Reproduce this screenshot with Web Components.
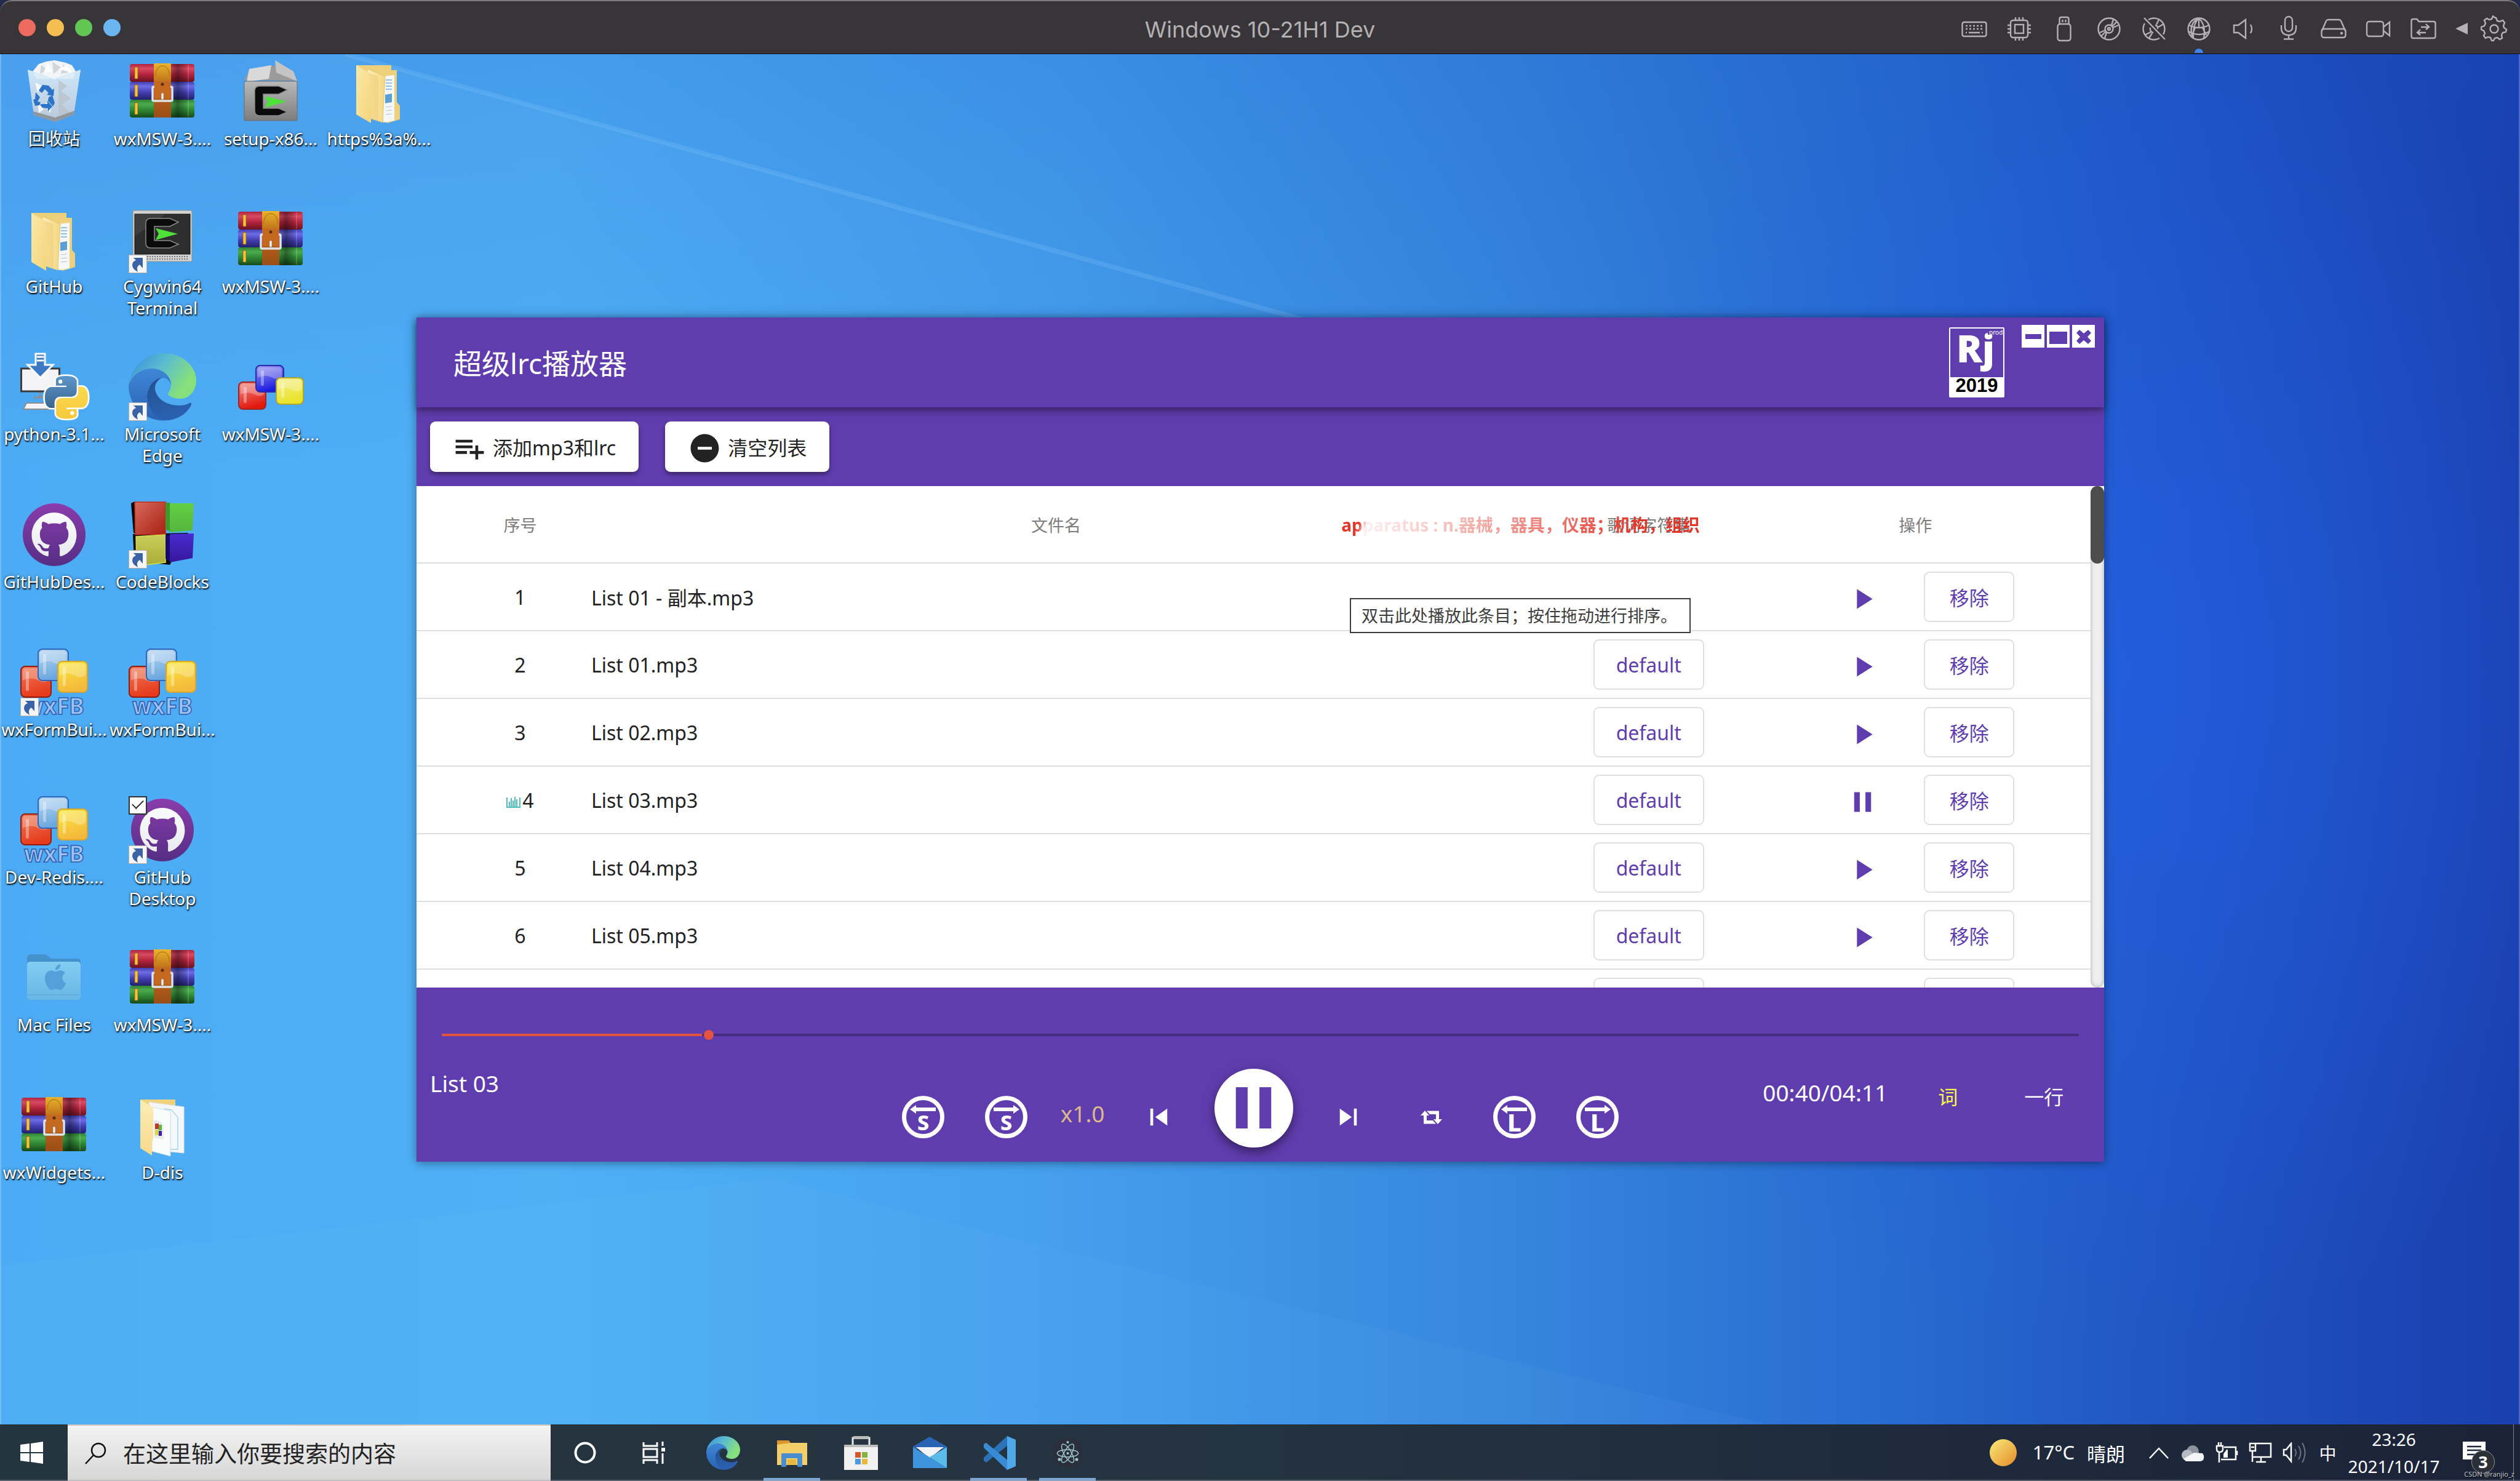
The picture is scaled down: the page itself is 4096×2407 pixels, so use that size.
<!DOCTYPE html>
<html lang="zh-CN">
<head>
<meta charset="utf-8">
<title>Windows 10-21H1 Dev</title>
<style>
  html, body {
    margin: 0;
    height: 100%;
  }

  body {
    display: flex;
    flex-direction: column;
    overflow: hidden;
    background: #232c4d;
    font-family: "Noto Sans", "Noto Sans CJK SC", sans-serif;
  }
</style>
</head>
<body>
<vm-titlebar>Windows 10-21H1 Dev</vm-titlebar>

<win-desktop>
  <desktop-column>
    <desktop-icon icon="recycle">回收站</desktop-icon>
    <desktop-icon icon="folder">GitHub</desktop-icon>
    <desktop-icon icon="pyinstall">python-3.1...</desktop-icon>
    <desktop-icon icon="github">GitHubDes...</desktop-icon>
    <desktop-icon icon="wxfb" shortcut>wxFormBui...</desktop-icon>
    <desktop-icon icon="wxfb">Dev-Redis....</desktop-icon>
    <desktop-icon icon="macfolder">Mac Files</desktop-icon>
    <desktop-icon icon="rar">wxWidgets...</desktop-icon>
  </desktop-column>
  <desktop-column>
    <desktop-icon icon="rar">wxMSW-3....</desktop-icon>
    <desktop-icon icon="cygterm" shortcut>Cygwin64<br>Terminal</desktop-icon>
    <desktop-icon icon="edge" shortcut>Microsoft<br>Edge</desktop-icon>
    <desktop-icon icon="codeblocks" shortcut>CodeBlocks</desktop-icon>
    <desktop-icon icon="wxfb">wxFormBui...</desktop-icon>
    <desktop-icon icon="github" shortcut checked>GitHub<br>Desktop</desktop-icon>
    <desktop-icon icon="rar">wxMSW-3....</desktop-icon>
    <desktop-icon icon="ddis">D-dis</desktop-icon>
  </desktop-column>
  <desktop-column>
    <desktop-icon icon="cygbox">setup-x86...</desktop-icon>
    <desktop-icon icon="rar">wxMSW-3....</desktop-icon>
    <desktop-icon icon="wxcubes">wxMSW-3....</desktop-icon>
  </desktop-column>
  <desktop-column>
    <desktop-icon icon="folder">https%3a%...</desktop-icon>
  </desktop-column>

  <lrc-window slot="window">
    <lrc-header slot="header">超级lrc播放器</lrc-header>
    <lrc-toolbar slot="toolbar"></lrc-toolbar>
    <track-table slot="list"></track-table>
    <player-bar slot="player" track="List 03" time="00:40/04:11"></player-bar>
  </lrc-window>
</win-desktop>

<task-bar></task-bar>

<script>
const OCTOCAT = 'M8 0C3.58 0 0 3.58 0 8c0 3.54 2.29 6.53 5.47 7.59.4.07.55-.17.55-.38 0-.19-.01-.82-.01-1.49-2.01.37-2.53-.49-2.69-.94-.09-.23-.48-.94-.82-1.13-.28-.15-.68-.52-.01-.53.63-.01 1.08.58 1.23.82.72 1.21 1.87.87 2.33.66.07-.52.28-.87.51-1.07-1.78-.2-3.64-.89-3.64-3.95 0-.87.31-1.59.82-2.15-.08-.2-.36-1.02.08-2.12 0 0 .67-.21 2.2.82.64-.18 1.32-.27 2-.27.68 0 1.36.09 2 .27 1.53-1.04 2.2-.82 2.2-.82.44 1.1.16 1.92.08 2.12.51.56.82 1.27.82 2.15 0 3.07-1.87 3.75-3.65 3.95.29.25.54.73.54 1.48 0 1.07-.01 1.93-.01 2.2 0 .21.15.46.55.38A8.013 8.013 0 0016 8c0-4.42-3.58-8-8-8z';
const APPLE = 'M12.152 6.896c-.948 0-2.415-1.078-3.96-1.04-2.04.027-3.91 1.183-4.961 3.014-2.117 3.675-.546 9.103 1.519 12.09 1.013 1.454 2.208 3.09 3.792 3.039 1.52-.065 2.09-.987 3.935-.987 1.831 0 2.35.987 3.96.948 1.637-.026 2.676-1.48 3.676-2.948 1.156-1.688 1.636-3.325 1.662-3.415-.039-.013-3.182-1.221-3.22-4.857-.026-3.04 2.48-4.494 2.597-4.559-1.429-2.09-3.623-2.324-4.39-2.376-2-.156-3.675 1.09-4.61 1.09zM15.53 3.83c.843-1.012 1.4-2.427 1.245-3.83-1.207.052-2.662.805-3.532 1.818-.78.896-1.454 2.338-1.273 3.714 1.338.104 2.715-.688 3.559-1.701';
const PY_BLUE = 'M14.25.18l.9.2.73.26.59.3.45.32.34.34.25.34.16.33.1.3.04.26.02.2-.01.13V8.5l-.05.63-.13.55-.21.46-.26.38-.3.31-.33.25-.35.19-.35.14-.33.1-.3.07-.26.04-.21.02H8.77l-.69.05-.59.14-.5.22-.41.27-.33.32-.27.35-.2.36-.15.37-.1.35-.07.32-.04.27-.02.21v3.06H3.17l-.21-.03-.28-.07-.32-.12-.35-.18-.36-.26-.36-.36-.35-.46-.32-.59-.28-.73-.21-.88-.14-1.05-.05-1.23.06-1.22.16-1.04.24-.87.32-.71.36-.57.4-.44.42-.33.42-.24.4-.16.36-.1.32-.05.24-.01h.16l.06.01h8.16v-.83H6.18l-.01-2.75-.02-.37.05-.34.11-.31.17-.28.25-.26.31-.23.38-.2.44-.18.51-.15.58-.12.64-.1.71-.06.77-.04.84-.02 1.27.05z';
const PY_YELLOW = 'M21.1 6.11l.28.06.32.12.35.18.36.27.36.35.35.47.32.59.28.73.21.88.14 1.04.05 1.23-.06 1.23-.16 1.04-.24.86-.32.71-.36.57-.4.45-.42.33-.42.24-.4.16-.36.09-.32.05-.24.02-.16-.01h-8.22v.82h5.84l.01 2.76.02.36-.05.34-.11.31-.17.29-.25.25-.31.24-.38.2-.44.17-.51.15-.58.13-.64.09-.71.07-.77.04-.84.01-1.27-.04-1.07-.14-.9-.2-.73-.25-.59-.3-.45-.33-.34-.34-.25-.34-.16-.33-.1-.3-.04-.25-.02-.2.01-.13v-5.34l.05-.64.13-.54.21-.46.26-.38.3-.32.33-.24.35-.2.35-.14.33-.1.3-.06.26-.04.21-.02.13-.01h5.84l.69-.05.59-.14.5-.21.41-.28.33-.32.27-.35.2-.36.15-.36.1-.35.07-.32.04-.28.02-.21V6.07h2.09l.14.01z';

const grad = (id, from, to, attrs = 'x1="0" y1="0" x2="0" y2="1"') =>
  `<linearGradient id="${id}" ${attrs}><stop offset="0" stop-color="${from}"/><stop offset="1" stop-color="${to}"/></linearGradient>`;

const tube = (id, light, mid, dark) =>
  `<linearGradient id="${id}" x1="0" y1="0" x2="0" y2="1"><stop offset="0" stop-color="${mid}"/><stop offset=".25" stop-color="${light}"/><stop offset=".6" stop-color="${mid}"/><stop offset="1" stop-color="${dark}"/></linearGradient>`;

const EDGE = `
  <defs>
    <linearGradient id="ea" x1="0" y1="0" x2="1" y2=".5"><stop offset=".1" stop-color="#3c94dd"/><stop offset=".5" stop-color="#5bbcd0"/><stop offset=".95" stop-color="#86e07c"/></linearGradient>
    ${grad('eb', '#3f86d6', '#2a62b4')}
    ${grad('ec', '#24508f', '#2a61b0', 'x1="0" y1="0" x2=".3" y2="1"')}
  </defs>
  <path fill="url(#ea)" d="M0 52C4 22 28 0 57 0c31 0 53 22 53 44 0 18-12 30-26 30-10 0-20-4-20-8 0-2 5-6 5-15C69 40 56 25 38 25 20 25 6 36 0 52z"/>
  <path fill="url(#eb)" d="M0 52c6-16 20-27 38-27 18 0 31 13 31 26-3-8-9-11-14-11-13 0-25 14-25 28 0 24 18 38 34 41C28 113 0 86 0 52z"/>
  <path fill="url(#ec)" d="M55 40c-13 0-25 14-25 30 0 24 20 40 36 39 18-3 30-13 36-25 1-3-1-4-3-3-5 3-11 4-17 4-22 0-39-13-39-29 0-6 4-13 12-16z"/>`;

const CYG = `
  <path d="M41 4H10Q2 4 2 12v32q0 8 8 8h31l14-6-14-6H16V17h25l14-7z" fill="#0b0b0b" stroke="#8a8a8a" stroke-width="1.5"/>
  <path fill="#4fe03a" d="M18 20l36 9-36 10 5-10z"/>`;

const cube = (x, y, w, h, light, dark, edge) => `
  <linearGradient id="c${x}${y}" x1="0" y1="0" x2=".3" y2="1"><stop offset="0" stop-color="${light}"/><stop offset="1" stop-color="${dark}"/></linearGradient>
  <rect x="${x}" y="${y}" width="${w}" height="${h}" rx="7" fill="url(#c${x}${y})" stroke="${edge}" stroke-width="2"/>
  <path d="M${x + 3} ${y + h * .45}q${w * .3} ${-h * .12} ${w * .5} 0t${w - 6 - w * .5} 0V${y + 8}q0-5-5-5H${x + 8}q-5 0-5 5z" fill="#fff" opacity=".28"/>
  <rect x="${x + 8}" y="${y + 8}" width="5" height="${h - 18}" rx="2" fill="#fff" opacity=".35"/>`;

// every drawing used on the page: [viewBox, markup]
const ICONS = {
  recycle: ['0 0 110 110', `
    <defs>${grad('rb', '#dff0fb', '#c7ced6')}</defs>
    <path fill="#f2f4f6" d="M20 22l10-12 12-4 14-2 18 4 10 4 6 10-4 12H26z"/>
    <path fill="#d2d6da" d="M34 12l12 8-14 6zM52 6l14 10-12 10zM70 10l8 14-12 2z"/>
    <path fill="#ffffff" d="M44 8l8 14-14 2zM62 18l14-6 8 12z"/>
    <path d="M12 20l43 15 43-15-11 72-30 12-35-11z" fill="url(#rb)" opacity=".88"/>
    <path d="M62 36l14 10-10 8 16 12-14 10 12 12-18 12z" fill="#b9c1c8" opacity=".7"/>
    <path d="M24 40l12 6-8 10zM40 74l14-4-6 20zM28 72l10 12-8 6z" fill="#fff" opacity=".8"/>
    <path d="M12 20l43 15 43-15" fill="none" stroke="#cfeafa" stroke-width="1.5"/>
    <path d="M22 93l35 11 30-12 1-6-31 11-36-10z" fill="#8f969c"/>
    <g fill="#2b74c9"><path d="M30 53l6-9 10 1 6 7 3-2-1 12-11-2 3-3-6-6-5 6z"/><path d="M25 56l7 8-4 7 5 1-2 5-7 1-3-10 3-1z"/><path d="M36 75h8v-5l8 9-7 8v-5l-9-1-4-5z"/><path d="M46 64l6-3 4 12-3 6-8-9z"/></g>`],

  folder: ['0 0 110 110', `
    <defs>${grad('fa', '#fbe9a8', '#f4d57c', 'x1="0" y1="0" x2="1" y2="1"')}${grad('fb', '#fdf0bd', '#f3d682', 'x1="0" y1="0" x2="1" y2="0"')}</defs>
    <path fill="#edcf7c" d="M18 12h57v8h9v52l5 6v22l-20 6-51-16z"/>
    <path fill="#f6f7f8" d="M62 30l18-2v74l-18 3z"/>
    <path stroke="#6fb3e6" stroke-width="1.5" d="M66 36h10M66 41h10M66 46h10M66 51h10"/>
    <path fill="#5b9fd4" d="M65 60l11-2v14l-11 2z"/>
    <path stroke="#b9c4cc" stroke-width="1.2" d="M66 80l10-1M66 86l10-1M66 92l10-1"/>
    <path fill="url(#fb)" stroke="#ecc96c" d="M36 18l29 12-4 75-24-8z"/>
    <path fill="url(#fa)" d="M18 12l24 14v80L18 92z"/>
    <path fill="#f0cf78" opacity=".6" d="M42 26l12 4v72l-12-4z"/>`],

  pyinstall: ['0 0 110 110', `
    <rect x="1.5" y="25" width="62" height="37" fill="#f3f3f5" stroke="#3b3b3d" stroke-width="3"/>
    <path d="M32 64v7M22 72h24" stroke="#8d8d8f" stroke-width="3"/>
    <path d="M10 81h40v10H5z" fill="#f3f3f5" stroke="#8d8d8f" stroke-width="2"/>
    <path d="M25 1h15v18h13L32.5 40 12 19h13z" fill="#3c78c4" stroke="#fff" stroke-width="3"/>
    <path d="M27 6h11M27 12h11" stroke="#fff" stroke-width="3"/>
    <g transform="translate(40 37) scale(2.9)">
      <defs>${grad('pb', '#5c96c8', '#3a6690')}${grad('py', '#fbd94f', '#f6c93c')}</defs>
      <path d="${PY_BLUE}" fill="#fff" stroke="#fff" stroke-width="1.8"/><path d="${PY_YELLOW}" fill="#fff" stroke="#fff" stroke-width="1.8"/>
      <path d="${PY_BLUE}" fill="url(#pb)"/><path d="${PY_YELLOW}" fill="url(#py)"/>
      <circle cx="8.7" cy="3.2" r="1.1" fill="#fff"/><circle cx="15.3" cy="20.8" r="1.1" fill="#fff"/>
    </g>`],

  github: ['0 0 110 110', `
    <defs>${grad('gh', '#8a3cab', '#552e85')}${grad('gw', '#fbfbfd', '#e8ebee')}</defs>
    <circle cx="55" cy="55" r="51" fill="url(#gh)"/>
    <path transform="translate(18.5 19) scale(4.56)" d="${OCTOCAT}" fill="url(#gw)"/>`],

  wxfb: ['0 0 110 110', `
    ${cube(1, 29, 49, 50, '#ee7a5a', '#e63c1c', '#8f1d12')}
    ${cube(29, 1, 49, 51, '#b8d8f2', '#6ba6de', '#2c66bd')}
    ${cube(61, 21, 48, 50, '#fbe93e', '#f4b93c', '#d9a52c')}
    <text x="55" y="107" text-anchor="middle" font-family="Noto Sans" font-weight="700" font-size="37" fill="#9cc2ee" stroke="#2f5cb4" stroke-width="1.5">wxFB</text>`],

  wxcubes: ['0 0 110 110', `
    ${cube(3, 47, 44, 44, '#f08b86', '#e1190f', '#a02420')}
    ${cube(31, 20, 45, 43, '#9b9af0', '#1a1ae0', '#2b2ba8')}
    ${cube(64, 40, 44, 43, '#f4f08a', '#e9e32a', '#aaa62e')}`],

  macfolder: ['0 0 110 110', `
    <defs>${grad('mf', '#82cdf3', '#68b6e4')}</defs>
    <path fill="#4492cc" d="M11 24q0-7 7-7h20q4 0 7 3l5 4h42q6 0 6 6v10H11z"/>
    <rect x="11" y="29" width="87" height="62" rx="5" fill="url(#mf)"/>
    <path d="M12 83h85" stroke="#5aa6d4" stroke-width="1"/>
    <path transform="translate(36 33) scale(1.75)" fill="#559fda" d="${APPLE}"/>`],

  rar: ['0 0 110 110', `
    <defs>${tube('r1', '#d84a62', '#b0233c', '#6b1321')}${tube('r2', '#6f6ce6', '#413eb0', '#24216c')}${tube('r3', '#4cab4e', '#2d8433', '#174a1b')}
    ${grad('rs', '#e9b52c', '#c2741c')}${grad('ro', '#d67a24', '#9a4e16')}
    <linearGradient id="sh"><stop offset=".6" stop-opacity="0"/><stop offset=".74" stop-opacity=".4"/><stop offset=".9" stop-opacity="0"/></linearGradient></defs>
    <rect x="2" y="10" width="105" height="29" rx="4" fill="url(#r1)"/>
    <rect x="2" y="39" width="105" height="29" rx="4" fill="url(#r2)"/>
    <rect x="2" y="68" width="105" height="29" rx="4" fill="url(#r3)"/>
    <rect x="2" y="10" width="105" height="87" fill="url(#sh)"/>
    <path d="M97 11v27M97 40v27M97 69v27" stroke="#fff" opacity=".15" stroke-width="2"/>
    <path fill="#f5c43a" stroke="#8b5a12" stroke-width=".8" d="M10 15h5v19h-5zM10 44h5v19h-5zM10 73h5v19h-5z"/>
    <rect x="41" y="9" width="28" height="88" fill="url(#ro)"/>
    <path d="M41 9h28v26q0 3-3 3H44q-3 0-3-3z" fill="url(#rs)"/>
    <path d="M43 30q2-17 12-17t12 17" fill="none" stroke="#a8690f" stroke-width="1"/>
    <rect x="39" y="47" width="32" height="23" rx="2" fill="none" stroke="#dfe2e6" stroke-width="3.5"/>
    <rect x="42" y="38" width="26" height="28" fill="#c4691f"/>
    <circle cx="55" cy="43" r="2.5" fill="#5a2e0c"/>
    <rect x="53" y="57" width="4" height="11" rx="2" fill="#eceef0" stroke="#777" stroke-width=".5"/>`],

  cygbox: ['0 0 110 110', `
    <defs>${grad('cb', '#b9b9b9', '#7d7d7d')}</defs>
    <path fill="#9b9b9b" d="M12 36L20 20l35-7h20l15 10 8 14z"/>
    <path fill="#d9d9d9" d="M20 18l36-6-4 22-36 5z"/>
    <path fill="#c4c4c4" d="M62 4l30 18 6 16-34-14z"/>
    <rect x="12" y="38" width="86" height="64" rx="2" fill="url(#cb)" stroke="#6b6b6b"/>
    <g transform="translate(27 42)">${CYG}</g>`],

  cygterm: ['0 0 110 110', `
    <rect x="7" y="8" width="96" height="83" rx="2" fill="#d3d3d3" stroke="#8d8d8d"/>
    <rect x="10" y="14" width="90" height="65" fill="#2e2e2e" stroke="#111"/>
    <path d="M10 14h50L10 50z" fill="#fff" opacity=".08"/>
    <path d="M30 83h66M30 87h66" stroke="#777" stroke-width="2" stroke-dasharray="2 2"/>
    <g transform="translate(26 17)">${CYG}</g>`],

  edge: ['0 0 110 110', EDGE],

  codeblocks: ['0 0 110 110', `
    <defs>${grad('k1', '#d86a5e', '#a81f12', 'x1="0" y1="0" x2="1" y2="1"')}${grad('k2', '#63cf45', '#55b53c')}${grad('k3', '#c9cf5c', '#a9ab34')}${grad('k4', '#4a2cd0', '#34169c')}</defs>
    <path fill="#0a0a0a" d="M4 4l6-3 6 54-8-3zM7 54l90-2-30 52-58-6z"/>
    <path fill="url(#k1)" stroke="#c52a1b" stroke-width="1.5" d="M10 2h50v52l-49 1z"/>
    <path fill="#3f9a2c" d="M60 3h8v46l-8-2z"/><path fill="url(#k2)" d="M67 4h39l-2 44-37 3z"/>
    <path fill="url(#k3)" stroke="#d8dc4a" stroke-width="1.5" d="M12 58l48-3v45l-47 6z"/>
    <path fill="#1a0a70" d="M60 54l8 3v42l-8-5z"/><path fill="url(#k4)" d="M67 54l39-1-2 40-37 7z"/>`],

  ddis: ['0 0 110 110', `
    <defs>${grad('dd', '#fdeeb6', '#f6d98a')}</defs>
    <path fill="#f2d27c" d="M19 13h57v20H19z"/>
    <path fill="#f4f6f7" stroke="#dfe3e6" d="M33 17l57 8v75l-40-4z"/>
    <path fill="none" stroke="#7cc4ea" d="M58 28l12 2 10 12v52H58"/>
    <path fill="#fafbfb" stroke="#cfe3ef" d="M38 25l30 7v73l-30-8z"/>
    <path fill="#e8eaec" d="M41 46l10 2 6 8v22l-16-3z"/>
    <path fill="#c8332a" d="M43 52h6v9h-6z"/><path fill="#58b83e" d="M49 54h5v9h-5z"/><path fill="#d6d64a" d="M43 62h6v9h-6z"/><path fill="#3a1cb4" d="M49 64h5v8h-5z"/>
    <path fill="url(#dd)" d="M19 13l21 13v52l-2 2v24L19 92z"/>`],

  shortcut: ['0 0 30 30', `
    <rect x=".5" y=".5" width="29" height="29" fill="#f4f5f6" stroke="#b9aeac"/>
    <path fill="#3c63a6" d="M8 5h15v17l-5-6q-6 3-3 12-9-5-9-11 0-6 6-8z"/>`],

  // host toolbar
  keyboard: ['0 0 44 44', `<rect x="2.5" y="11" width="39" height="23" rx="3"/><path d="M8 17h28M8 22h28" stroke-dasharray="3 3"/><path d="M13 28h18M8 28h2M34 28h2"/>`],
  chip: ['0 0 44 44', `<rect x="8" y="8" width="28" height="28" rx="4"/><rect x="15" y="15" width="14" height="14"/><path d="M16 3v5M22 3v5M28 3v5M16 36v5M22 36v5M28 36v5M3 16h5M3 22h5M3 28h5M36 16h5M36 22h5M36 28h5"/>`],
  usb: ['0 0 44 44', `<rect x="11.5" y="14" width="21" height="27" rx="4"/><path d="M14.5 14V6q0-3 3-3h9q3 0 3 3v8M19.500 7v4M24.500 7v4"/>`],
  disc: ['0 0 44 44', `<circle cx="22" cy="22" r="17.500"/><circle cx="22" cy="22" r="6.500"/><circle cx="22" cy="22" r="2"/><path d="M26 16l3-9M27 18l8-8M18 28l-3 9M17 26l-8 8M28 20l9-4M16 24L7 28"/>`],
  discoff: ['0 0 44 44', `<path d="M13 7a17.500 17.500 0 0 1 24 24M31 37A17.500 17.500 0 0 1 7 13M6 4l34 35M26 15l4-8M29 19l9-5M17 27l-10 5M19 29l-5 8M24 16q5 1 4 6M16 20q-1 7 5 8"/>`],
  globe: ['0 0 44 44', `<circle cx="22" cy="22" r="17.500"/><path d="M22 4.500Q12 14 13 36M22 4.500Q34 16 30 37M22 4.500V20M6 16q16 8 32 0M5 26q18 10 34 0M22 4.500Q4 14 12 36M16 20l-6 14M28 20l6 12"/>`],
  speaker: ['0 0 44 44', `<path d="M6 16h7l12-9v30l-12-9H6zM33 15q4 7 0 14"/>`],
  mic: ['0 0 44 44', `<rect x="16" y="2" width="12" height="24" rx="6"/><path d="M10 16v4q0 12 12 12t12-12v-4M22 32v6M14 38.500h16"/>`],
  drive: ['0 0 44 44', `<path d="M2.500 26L10 9q1-2 3-2h18q2 0 3 2l7.500 17v6q0 4-4 4h-31q-4 0-4-4v-6q0-4 4-4h31q4 0 4 4"/><circle cx="35" cy="29" r="1"/>`],
  camera: ['0 0 44 44', `<rect x="3" y="10" width="27" height="24" rx="4"/><path d="M30 19l10-8v22l-10-8"/>`],
  sharefolder: ['0 0 44 44', `<path d="M2.500 34V9q0-3 3-3h6l3 4h24q3 0 3 3v21q0 3-3 3h-33q-3 0-3-3z"/><path d="M18 19h12M26 14l5 5-5 4M26 28H13M17 23l-5 5 5 4"/>`],
  triangle: ['0 0 22 44', `<path stroke="none" fill="currentColor" d="M21 12v19L1 21.500z"/>`],
  gear: ['0 0 44 44', `<circle cx="22" cy="22" r="6.500"/><path d="M22 3l3 1 2 5 4 1 5-2 3 4-2 5 1 3 4 3-1 4-5 1-2 4 1 5-4 2-4-3-4 1-2 4h-3l-2-5-4-1-4 2-3-4 2-4-2-4-4-2v-4l5-2 2-4-2-5 4-3 4 2 4-1 2-5z"/>`],

  // player
  listadd: ['0 0 24 24', `<path d="M14 10H2v2h12v-2zm0-4H2v2h12V6zm4 8v-4h-2v4h-4v2h4v4h2v-4h4v-2h-4zM2 16h8v-2H2v2z"/>`],
  remove: ['0 0 24 24', `<path d="M12 2C6.480 2 2 6.480 2 12s4.480 10 10 10 10-4.480 10-10S17.520 2 12 2zm5 11H7v-2h10v2z"/>`],
  play: ['0 0 24 24', `<path d="M8 5v14l11-7z"/>`],
  pause: ['0 0 24 24', `<path d="M6 19h4V5H6v14zm8-14v14h4V5h-4z"/>`],
  prev: ['0 0 24 24', `<path d="M6 6h2v12H6zm3.500 6l8.500 6V6z"/>`],
  next: ['0 0 24 24', `<path d="M6 18l8.500-6L6 6v12zM16 6v12h2V6h-2z"/>`],
  repeat: ['0 0 35 22', `<path d="M7 0l7 8H10v8h10l5 5.500H5V8H0zM28 22l-7-8h4V6H15L10 .5h20V14h5z"/>`],
  wave: ['0 0 23 20', `<path fill="none" stroke="#4fc0c0" stroke-width="2" d="M1 3v16M5 10v9M8 4v15M11 8v11M14 2v17M17 6v13M22 3v16M0 19h23"/>`],

  // taskbar
  start: ['0 0 37 36', `<path fill="#fff" d="M0 5l15-2v14H0zM17 3l20-3v17H17zM0 19h15v14L0 31zM17 19h20v17l-20-3z"/>`],
  search: ['0 0 36 36', `<g fill="none" stroke="#111" stroke-width="2.5"><circle cx="23" cy="13" r="11"/><path d="M15 21L2 35"/></g>`],
  cortana: ['0 0 36 36', `<circle cx="18" cy="18" r="15.5" fill="none" stroke="#fff" stroke-width="4"/>`],
  taskview: ['0 0 38 36', `<path fill="none" stroke="#fff" stroke-width="3" d="M2 1v6h22V1M2 12h22v13H2zM2 36v-6h22v6M33 0v7M33 19v17"/><rect x="31" y="10" width="6" height="6" fill="#fff"/>`],
  explorer: ['0 0 55 55', `<path fill="#d8962c" d="M3 7h19l4 5v8H3z"/><path fill="#f3cf6a" d="M3 14l22-3h27v36H3z"/><path fill="#4a8ed0" d="M10 30q0-2 2-2h30q2 0 2 2v20h-8V36H18v14h-8z"/><path fill="#e9b840" d="M20 38h14v9H20z"/>`],
  store: ['0 0 55 55', `<path fill="none" stroke="#e9e9e9" stroke-width="3" d="M14 22V3h27v19"/><path fill="#bcbcbc" d="M15 0h25v5H15zM0 14h55v6H0z"/><path fill="#f1f1f1" d="M0 18h55v37H0z"/><path fill="#d8532f" d="M18 26h9v9h-9z"/><path fill="#85b43c" d="M29 26h9v9h-9z"/><path fill="#4a9ae0" d="M18 37h9v9h-9z"/><path fill="#efb73a" d="M29 37h9v9h-9z"/>`],
  mail: ['0 0 55 55', `<path fill="#2a62b4" d="M0 17L27 1l28 16v4H0z"/><path fill="#f1f3f5" d="M5 18h45L27 36z"/><path fill="#5bbbe8" d="M0 18l55 34V18L27 34z"/><path fill="#3f94dc" d="M0 18l55 34H0z"/>`],
  vscode: ['0 0 55 55', `<path fill="#2b73b8" d="M41 0L3 35v5l4 3 35-28z"/><path fill="#3a8ad4" d="M3 13v6l38 36 3-14L7 11z"/><path fill="#4fa8ea" d="M41 0l14 6v43l-14 6z"/>`],
  electron: ['0 0 55 55', `<circle cx="27.5" cy="27.5" r="25" fill="#2b2f3c"/><g fill="none" stroke="#9fc7cc" stroke-width="1.5"><ellipse cx="27.5" cy="28" rx="17" ry="6"/><ellipse cx="27.5" cy="28" rx="17" ry="6" transform="rotate(60 27.5 28)"/><ellipse cx="27.5" cy="28" rx="17" ry="6" transform="rotate(120 27.5 28)"/></g><g fill="#9fc7cc"><circle cx="27.5" cy="28" r="2"/><circle cx="14" cy="38" r="2.5"/><circle cx="42" cy="38" r="2.5"/><circle cx="27.5" cy="10" r="2"/></g>`],
  sun: ['0 0 44 44', `<defs>${grad('su', '#f8ec7a', '#e58a2a', 'x1="0" y1="0" x2="1" y2="1"')}</defs><circle cx="22" cy="22" r="22" fill="url(#su)"/>`],
  chevron: ['0 0 38 34', `<path fill="none" stroke="#fff" stroke-width="2.5" d="M4 26L19 10l15 16"/>`],
  cloud: ['0 0 38 34', `<circle cx="19" cy="15" r="10" fill="#8d939c"/><circle cx="10" cy="21" r="9" fill="#b7bbc1"/><path fill="#f4f5f6" d="M4 27l17-10 14 1q4 5 1 11l-4 2H8z"/>`],
  battery: ['0 0 38 34', `<g fill="none" stroke="#fff" stroke-width="2.5"><path d="M15 8h19v20H10M36 14v7M6 0v6M10 0v6M3 6h10v5q0 5-5 5t-5-5zM7 16v17"/></g><path fill="#fff" d="M14 25V19l5-7h2v13z"/>`],
  network: ['0 0 38 34', `<g fill="none" stroke="#fff" stroke-width="2.5"><path d="M12 2h24v22H6M2 2h9v12H2zM6 14v18M20 24v8M12 32h16M4 8h5"/></g>`],
  volume: ['0 0 38 34', `<path fill="none" stroke="#fff" stroke-width="2.5" d="M2 12h4l8-10v29L6 21H2z"/><path fill="none" stroke="#6b7383" stroke-width="2" d="M20 11q4 6 0 12M26 6q7 11 0 22M32 1q9 16 0 32"/>`],
  notify: ['0 0 37 36', `<path fill="#fff" d="M0 0h37v29H22l-7 7v-7H0z"/><path stroke="#1e2639" stroke-width="2.5" d="M7 8h23M7 14h23M7 21h16"/>`]
};

const svg = (name) => `<svg viewBox="${ICONS[name][0]}" aria-hidden="true">${ICONS[name][1]}</svg>`;

class VmTitlebar extends HTMLElement {
  constructor() {
    super();
    const shadow = this.attachShadow({ mode: 'open' });
    const tools = ['keyboard', 'chip', 'usb', 'disc', 'discoff', 'globe', 'speaker', 'mic', 'drive', 'camera', 'sharefolder'];
    shadow.innerHTML = `
      <style>
        :host {
          display: grid;
          grid-template-columns: 1fr auto 1fr;
          align-items: center;
          box-sizing: border-box;
          height: 88px;
          flex: none;
          background: #383538;
          border-top: 2px solid #7d7b7e;
          border-bottom: 1px solid #0c0c10;
          border-radius: 20px 20px 0 0;
          color: #b3b1b3;
          font: 36px/48px Inter, "Noto Sans", sans-serif;
        }
        button {
          display: flex;
          padding: 0;
          border: 0;
          background: none;
          color: inherit;
        }
        .lights {
          display: flex;
          gap: 18px;
          padding-left: 30px;
        }
        .lights button {
          width: 28px;
          height: 28px;
          border-radius: 50%;
        }
        .title { padding-top: 6px; }
        .tools {
          display: flex;
          justify-content: flex-end;
          gap: 29px;
          padding: 4px 20px 0 0;
        }
        .tools button { position: relative; }
        .tools svg {
          height: 44px;
          fill: none;
          stroke: currentColor;
          stroke-width: 2.4;
        }
        .active::after {
          content: "";
          position: absolute;
          left: 15px;
          top: 54px;
          width: 14px;
          height: 7px;
          border-radius: 7px 7px 0 0;
          background: #3f83f0;
        }
        .last { display: flex; gap: 20px; }
      </style>
      <div class="lights">
        <button aria-label="关闭" style="background:#ec6a5f"></button>
        <button aria-label="最小化" style="background:#f4be50"></button>
        <button aria-label="全屏" style="background:#62c655"></button>
        <button aria-label="融合" style="background:#6bb6f0"></button>
      </div>
      <div class="title"><slot></slot></div>
      <div class="tools">
        ${tools.map((t) => `<button class="${t === 'globe' ? 'active' : ''}" aria-label="${t}">${svg(t)}</button>`).join('')}
        <div class="last">
          <button aria-label="collapse">${svg('triangle')}</button>
          <button aria-label="settings">${svg('gear')}</button>
        </div>
      </div>
    `;
  }
}
customElements.define('vm-titlebar', VmTitlebar);

class WinDesktop extends HTMLElement {
  constructor() {
    super();
    this.attachShadow({ mode: 'open' }).innerHTML = `
      <style>
        :host {
          display: block;
          position: relative;
          flex: 1;
          min-height: 0;
          overflow: hidden;
          background:
            radial-gradient(ellipse 22% 50% at 84% 45%, rgba(36, 96, 236, .6), rgba(36, 96, 236, 0)),
            linear-gradient(rgba(20, 80, 195, .2), rgba(20, 80, 195, 0) 30%),
            linear-gradient(90deg, #4cabf4 0%, #4fb0f6 22%, #459fed 42%, #3686dd 60%, #286bd0 75%, #1f51c0 88%, #1a3fae 100%);
        }
        .beams {
          position: absolute;
          width: 100%;
          height: 100%;
        }
        .icons {
          position: relative;
          display: flex;
          padding-top: 6px;
        }
        .edge {
          position: absolute;
          inset: 0;
          border: solid rgba(255, 255, 255, .22);
          border-width: 0 2px;
          pointer-events: none;
        }
      </style>
      <svg class="beams" viewBox="0 0 1568 853" preserveAspectRatio="none" aria-hidden="true">
        <defs>
          <linearGradient id="b" x1="0" y1="0" x2=".25" y2="1"><stop offset="0" stop-color="#8fd0ff" stop-opacity=".12"/><stop offset=".5" stop-color="#8fd0ff" stop-opacity="0"/></linearGradient>
        </defs>
        <path fill="url(#b)" d="M215 0L900 190v300L0 420V0z"/>
        <path fill="none" stroke="#9ad4ff" stroke-opacity=".18" stroke-width="3" d="M215 0L900 190"/>
        <path fill="#8fd0ff" fill-opacity=".05" d="M0 754L480 700 1100 853H0z"/>
      </svg>
      <div class="icons"><slot></slot></div>
      <slot name="window"></slot>
      <div class="edge"></div>
    `;
  }
}
customElements.define('win-desktop', WinDesktop);

class DesktopColumn extends HTMLElement {
  constructor() {
    super();
    this.attachShadow({ mode: 'open' }).innerHTML = `
      <style>
        :host {
          display: grid;
          grid-template-columns: 176px;
          grid-auto-rows: 240px;
          align-content: start;
          width: 176px;
        }
      </style>
      <slot></slot>
    `;
  }
}
customElements.define('desktop-column', DesktopColumn);

class DesktopIcon extends HTMLElement {
  connectedCallback() {
    if (this.shadowRoot) return;
    this.attachShadow({ mode: 'open' }).innerHTML = `
      <style>
        :host { display: block; }
        a {
          display: flex;
          flex-direction: column;
          align-items: center;
          gap: 4px;
          color: #fff;
          text-decoration: none;
          text-align: center;
          white-space: nowrap;
          font-size: 28px;
          line-height: 35px;
        }
        .label { text-shadow: 1px 2px 2px rgba(0, 0, 0, .95), 0 0 4px rgba(0, 0, 0, .55); }
        .pic {
          position: relative;
          width: 110px;
          height: 110px;
        }
        .pic > svg {
          display: block;
          width: 100%;
          height: 100%;
          overflow: visible;
        }
        .badge {
          position: absolute;
          left: 0;
          bottom: 0;
          width: 30px;
          height: 30px;
        }
        .badge svg { display: block; }
        input {
          appearance: none;
          position: absolute;
          left: 0;
          top: 0;
          width: 30px;
          height: 30px;
          margin: 0;
          border: 2px solid #333;
          background: #fff;
        }
        input::after {
          content: "";
          position: absolute;
          left: 4px;
          top: 4px;
          width: 16px;
          height: 8px;
          border: solid #333;
          border-width: 0 0 2px 2px;
          transform: rotate(-45deg);
        }
      </style>
      <a href="#">
        <span class="pic">
          ${svg(this.getAttribute('icon'))}
          ${this.hasAttribute('shortcut') ? `<span class="badge">${svg('shortcut')}</span>` : ''}
          ${this.hasAttribute('checked') ? '<input type="checkbox" checked aria-label="选择">' : ''}
        </span>
        <span class="label"><slot></slot></span>
      </a>
    `;
  }
}
customElements.define('desktop-icon', DesktopIcon);

class LrcWindow extends HTMLElement {
  constructor() {
    super();
    this.attachShadow({ mode: 'open' }).innerHTML = `
      <style>
        :host {
          --purple: #603dae;
          position: absolute;
          left: 16.53%;
          top: 428px;
          width: 66.97%;
          height: 57vh;
          display: flex;
          flex-direction: column;
          background: var(--purple);
          box-shadow: 0 2px 14px rgba(0, 0, 0, .4);
        }
      </style>
      <slot name="header"></slot>
      <slot name="toolbar"></slot>
      <slot name="list"></slot>
      <slot name="player"></slot>
    `;
  }
}
customElements.define('lrc-window', LrcWindow);

class LrcHeader extends HTMLElement {
  constructor() {
    super();
    this.attachShadow({ mode: 'open' }).innerHTML = `
      <style>
        :host {
          position: relative;
          z-index: 1;
          display: flex;
          align-items: flex-start;
          flex: none;
          height: 146px;
          padding: 0 15px 0 60px;
          background: var(--purple);
          color: #fff;
          box-shadow: 0 5px 10px rgba(0, 0, 0, .35), 0 2px 22px rgba(0, 0, 0, .15);
        }
        h1 {
          flex: 1;
          margin: 0;
          font-size: 46px;
          font-weight: 400;
          line-height: 148px;
        }
        .logo {
          width: 90px;
          height: 114px;
          margin: 16px 28px 0 0;
        }
        .buttons {
          display: flex;
          gap: 4px;
          padding-top: 12px;
        }
        button {
          display: grid;
          place-items: center;
          width: 37px;
          height: 37px;
          padding: 0;
          border: 0;
          background: #fff;
        }
        button svg { width: 37px; fill: var(--purple); }
      </style>
      <h1><slot></slot></h1>
      <svg class="logo" viewBox="0 0 90 114" role="img" aria-label="Rj 2019">
        <rect x="1" y="1" width="88" height="112" rx="1" fill="#603dae" stroke="#fff" stroke-width="2"/>
        <rect x="1" y="81" width="88" height="32" fill="#fff"/>
        <text x="12" y="57" fill="#fff" font-family="Open Sans, Noto Sans" font-weight="800" font-size="62">Rj</text>
        <rect x="63" y="3" width="25" height="9" fill="#603dae"/>
        <text x="65" y="12" fill="#fff" font-family="Noto Sans" font-size="10">prod</text>
        <text x="45" y="105" text-anchor="middle" fill="#000" font-family="Liberation Sans" font-weight="700" font-size="31">2019</text>
      </svg>
      <div class="buttons">
        <button aria-label="最小化"><svg viewBox="0 0 37 37"><path d="M6 15h26v8H6z"/></svg></button>
        <button aria-label="最大化"><svg viewBox="0 0 37 37"><path d="M4 11h29v20H4z"/></svg></button>
        <button aria-label="关闭"><svg viewBox="0 0 37 37"><path d="M12 8l7 6 7-6 5 5-6 6.500 6 6.500-5 5-7-6-7 6-5-5 6-6.500-6-6.500z"/></svg></button>
      </div>
    `;
  }
}
customElements.define('lrc-header', LrcHeader);

class LrcToolbar extends HTMLElement {
  constructor() {
    super();
    this.attachShadow({ mode: 'open' }).innerHTML = `
      <style>
        :host {
          display: flex;
          gap: 43px;
          flex: none;
          padding: 23px 22px;
        }
        button {
          display: flex;
          align-items: center;
          gap: 10px;
          height: 82px;
          padding: 0 37px;
          border: 0;
          border-radius: 9px;
          background: #fff;
          color: #222;
          font: inherit;
          font-size: 32px;
          box-shadow: 0 4px 7px rgba(0, 0, 0, .4);
        }
        svg {
          width: 55px;
          height: 55px;
          margin-top: 4px;
          fill: #222;
        }
      </style>
      <button>${svg('listadd')}添加mp3和lrc</button>
      <button>${svg('remove')}清空列表</button>
    `;
  }
}
customElements.define('lrc-toolbar', LrcToolbar);

class TrackTable extends HTMLElement {
  constructor() {
    super();
    this.attachShadow({ mode: 'open' });
    this.tracks = [
      { name: 'List 01 - 副本.mp3', charset: '' },
      { name: 'List 01.mp3', charset: 'default' },
      { name: 'List 02.mp3', charset: 'default' },
      { name: 'List 03.mp3', charset: 'default', playing: true },
      { name: 'List 04.mp3', charset: 'default' },
      { name: 'List 05.mp3', charset: 'default' },
      { name: '', charset: ' ' }
    ];
    this.render();
  }

  row(track, i) {
    // the last row only peeks out from under the player
    const label = track.name ? i + 1 : '';
    return `
      <tr>
        <td class="num">${track.playing ? svg('wave') : ''}${label}</td>
        <td class="name">${track.name}</td>
        <td>${track.charset ? `<button class="outlined" aria-label="字符集">${track.charset}</button>` : ''}</td>
        <td>
          <div class="actions">
            <button class="icon" aria-label="${track.playing ? '暂停' : '播放'}">${svg(track.playing ? 'pause' : 'play')}</button>
            <button class="outlined short" aria-label="移除">${track.name ? '移除' : ''}</button>
          </div>
        </td>
      </tr>`;
  }

  render() {
    this.shadowRoot.innerHTML = `
      <style>
        :host {
          position: relative;
          display: flex;
          flex: 1;
          min-height: 0;
          overflow: hidden;
          background: #fff;
          color: #222;
          font-size: 32px;
        }
        .scroll {
          flex: 1;
          overflow: hidden;
        }
        table {
          width: 100%;
          table-layout: fixed;
          border-collapse: separate;
          border-spacing: 0;
        }
        th, td {
          box-sizing: border-box;
          height: 110px;
          padding: 0;
          border-bottom: 2px solid #e0e0e0;
          text-align: center;
        }
        th {
          height: 126px;
          color: #7d7d7d;
          font-size: 27px;
          font-weight: 400;
        }
        .num { padding-left: 92px; }
        .num svg {
          width: 23px;
          height: 20px;
          margin-right: 3px;
        }
        .name {
          padding-left: 39px;
          text-align: left;
        }
        .ops { padding-right: 20px; }
        .outlined {
          min-width: 180px;
          height: 82px;
          padding: 0 34px;
          border: 2px solid #e0e0e0;
          border-radius: 9px;
          background: none;
          color: var(--purple);
          font: inherit;
          vertical-align: middle;
        }
        .short { min-width: 147px; }
        .actions {
          display: flex;
          justify-content: center;
          align-items: center;
          gap: 45px;
        }
        .icon {
          display: grid;
          place-items: center;
          width: 110px;
          height: 82px;
          padding: 6px 0 0;
          border: 0;
          background: none;
        }
        .icon svg {
          width: 55px;
          fill: var(--purple);
        }
        .bar {
          width: 22px;
          border-radius: 11px;
          background: #efefef;
          box-shadow: inset 0 0 6px rgba(0, 0, 0, .3);
        }
        .thumb {
          height: 126px;
          border-radius: 11px;
          background: #4d4d4d;
        }
        .lyric {
          position: absolute;
          left: 54.8%;
          top: 43px;
          font-size: 28px;
          font-weight: 700;
          line-height: 40px;
          white-space: nowrap;
          color: transparent;
          background: linear-gradient(110deg, #e53528 0 6%, #fdf0f0 8%, #fbdcda 18%, #f6b4b0 35%, #ec7068 62%, #e53528 82%);
          -webkit-background-clip: text;
          background-clip: text;
        }
        .tip {
          position: absolute;
          left: 55.3%;
          top: 182px;
          padding: 6px 20px 6px 17px;
          border: 2px solid #3c3c3c;
          background: #fff;
          color: #3c3c3c;
          font-size: 27px;
          line-height: 41px;
          white-space: nowrap;
        }
      </style>
      <div class="scroll">
        <table>
          <colgroup>
            <col style="width:9%"><col style="width:58.4%"><col style="width:12.4%"><col style="width:20.2%">
          </colgroup>
          <thead>
            <tr><th class="num">序号</th><th>文件名</th><th>歌词字符集</th><th class="ops">操作</th></tr>
          </thead>
          <tbody>${this.tracks.map((t, i) => this.row(t, i)).join('')}</tbody>
        </table>
      </div>
      <div class="bar"><div class="thumb"></div></div>
      <div class="lyric">apparatus : n.器械，器具，仪器；机构，组织</div>
      <div class="tip" role="tooltip">双击此处播放此条目；按住拖动进行排序。</div>
    `;
  }
}
customElements.define('track-table', TrackTable);

class PlayerBar extends HTMLElement {
  connectedCallback() {
    if (this.shadowRoot) return;
    const ring = (letter, back) => `
      <svg viewBox="0 0 69 69" aria-hidden="true">
        <circle cx="34.5" cy="34.5" r="31" fill="none" stroke="#fff" stroke-width="7"/>
        <path d="M14 19h32v-4l10 7-10 7v-4H14z" ${back ? 'transform="matrix(-1 0 0 1 69 0)"' : ''}/>
        <text x="34.5" y="${letter === 'L' ? 58 : 56}" text-anchor="middle" font-family="Noto Sans" font-weight="800" font-size="${letter === 'L' ? 40 : 34}">${letter}</text>
      </svg>`;
    this.attachShadow({ mode: 'open' }).innerHTML = `
      <style>
        :host {
          display: block;
          flex: none;
          padding: 57px 0 17px;
          color: #fff;
          font-size: 37px;
          line-height: 48px;
        }
        input {
          appearance: none;
          display: block;
          box-sizing: border-box;
          width: calc(100% - 82px);
          height: 40px;
          margin: 0 41px;
          background: linear-gradient(90deg, #e2543f 15.9%, #472d82 15.9%) center / 100% 4px no-repeat;
        }
        input::-webkit-slider-thumb {
          appearance: none;
          width: 16px;
          height: 16px;
          border-radius: 50%;
          background: #e2543f;
          box-shadow: none;
        }
        .row {
          display: grid;
          grid-template-columns: 1fr auto 1fr;
        }
        .track { padding: 35px 0 0 22px; }
        .controls {
          display: flex;
          align-items: flex-end;
          gap: 25px;
          height: 169px;
        }
        button {
          display: grid;
          place-items: center;
          padding: 0;
          border: 0;
          background: none;
          color: inherit;
          font: inherit;
        }
        .controls button {
          width: 110px;
          height: 110px;
        }
        svg { fill: #fff; }
        .ring svg { width: 69px; }
        .skip svg { width: 55px; }
        .loop svg { width: 35px; }
        .controls .rate {
          width: 88px;
          padding-bottom: 12px;
          color: #dbb98b;
        }
        .controls .main {
          width: 128px;
          height: 128px;
          margin: 0 10px 6px;
          border-radius: 50%;
          background: #fff;
          box-shadow: 0 8px 14px rgba(0, 0, 0, .35), 0 2px 24px rgba(0, 0, 0, .12);
        }
        .main svg {
          width: 115px;
          fill: var(--purple);
        }
        .right {
          display: flex;
          justify-content: flex-end;
          align-items: flex-start;
          padding-right: 20px;
        }
        .time {
          margin-right: 20px;
          padding-top: 50px;
        }
        .right button {
          width: 156px;
          height: 82px;
          margin-top: 40px;
          font-size: 32px;
        }
        .word { color: #fbfb45; }
      </style>
      <input type="range" min="0" max="1000" value="161" aria-label="播放进度">
      <div class="row">
        <div class="track">${this.getAttribute('track')}</div>
        <div class="controls">
          <button class="ring" aria-label="后退">${ring('S', true)}</button>
          <button class="ring" aria-label="前进">${ring('S', false)}</button>
          <button class="rate">x1.0</button>
          <button class="skip" aria-label="上一首">${svg('prev')}</button>
          <button class="main" aria-label="暂停">${svg('pause')}</button>
          <button class="skip" aria-label="下一首">${svg('next')}</button>
          <button class="loop" aria-label="循环">${svg('repeat')}</button>
          <button class="ring" aria-label="上一句">${ring('L', true)}</button>
          <button class="ring" aria-label="下一句">${ring('L', false)}</button>
        </div>
        <div class="right">
          <div class="time">${this.getAttribute('time')}</div>
          <button class="word">词</button>
          <button class="line">一行</button>
        </div>
      </div>
    `;
  }
}
customElements.define('player-bar', PlayerBar);

class TaskBar extends HTMLElement {
  constructor() {
    super();
    const apps = [['cortana', 36], ['taskview', 38], ['edge', 55], ['explorer', 55, 1], ['store', 55], ['mail', 55], ['vscode', 55, 1], ['electron', 55, 1]];
    const tray = ['chevron', 'cloud', 'battery', 'network', 'volume'];
    this.attachShadow({ mode: 'open' }).innerHTML = `
      <style>
        :host {
          position: relative;
          display: flex;
          flex: none;
          height: 92px;
          background: linear-gradient(90deg, #25353f, #243340 50%, #1e2a3c 78%, #1c2339);
          color: #fff;
          font-size: 28px;
        }
        :host::after {
          content: "";
          position: absolute;
          inset: auto 0 0;
          height: 2px;
          background: rgba(160, 165, 175, .4);
        }
        button {
          display: grid;
          place-items: center;
          padding: 0;
          border: 0;
          background: none;
          color: inherit;
          font: inherit;
        }
        .start { width: 110px; }
        .start svg { width: 37px; padding-right: 8px; }
        label {
          display: flex;
          align-items: center;
          gap: 25px;
          box-sizing: border-box;
          width: 785px;
          padding-left: 27px;
          border-top: 2px solid #c2c2c2;
          background: linear-gradient(#f3f3f3, #d6d6d6);
        }
        label svg { width: 36px; flex: none; }
        input {
          flex: 1;
          min-width: 0;
          border: 0;
          background: none;
          font: inherit;
          font-size: 37px;
        }
        input::placeholder { color: #222; opacity: 1; }
        .apps { display: flex; flex: 1; }
        .apps button {
          position: relative;
          width: 112px;
        }
        .open::after {
          content: "";
          position: absolute;
          left: 10px;
          bottom: 0;
          width: 92px;
          height: 5px;
          background: #7ba6d3;
        }
        .weather {
          display: flex;
          align-items: center;
          gap: 26px;
          padding-right: 27px;
          font-size: 31px;
        }
        .weather svg { width: 44px; }
        .weather .text { display: flex; gap: 20px; }
        .tray { display: flex; }
        .tray button { width: 55px; height: 100%; }
        .tray svg { width: 38px; }
        .clock {
          display: flex;
          flex-direction: column;
          justify-content: center;
          box-sizing: border-box;
          width: 160px;
          line-height: 44px;
          text-align: center;
        }
        .notify {
          position: relative;
          width: 115px;
          place-items: center start;
          padding-left: 32px;
          border-right: 1px solid #7c8290;
        }
        .notify svg { width: 37px; }
        .count {
          position: absolute;
          left: 46px;
          top: 42px;
          width: 36px;
          height: 36px;
          border: 1px solid #8d9096;
          border-radius: 50%;
          background: #2b2f36;
          font-size: 27px;
          font-weight: 700;
          line-height: 35px;
        }
        .desk { width: 10px; }
        .mark {
          position: absolute;
          right: 9px;
          bottom: 4px;
          color: #c9cbd0;
          font-size: 11px;
          line-height: 15px;
          text-shadow: 1px 1px 1px #000;
        }
      </style>
      <button class="start" aria-label="开始">${svg('start')}</button>
      <label>${svg('search')}<input type="text" placeholder="在这里输入你要搜索的内容" aria-label="搜索"></label>
      <div class="apps">
        ${apps.map(([name, size, open]) => `<button class="${open ? 'open' : ''}" aria-label="${name}"><span style="width:${size}px;display:grid">${svg(name)}</span></button>`).join('')}
      </div>
      <div class="weather">${svg('sun')}<div class="text"><span>17°C</span><span>晴朗</span></div></div>
      <div class="tray">
        ${tray.map((t) => `<button aria-label="${t}">${svg(t)}</button>`).join('')}
        <button>中</button>
      </div>
      <div class="clock"><span>23:26</span><span>2021/10/17</span></div>
      <button class="notify" aria-label="通知">${svg('notify')}<span class="count">3</span></button>
      <div class="desk"></div>
      <div class="mark">CSDN @ranjio_z</div>
    `;
  }
}
customElements.define('task-bar', TaskBar);
</script>
</body>
</html>
